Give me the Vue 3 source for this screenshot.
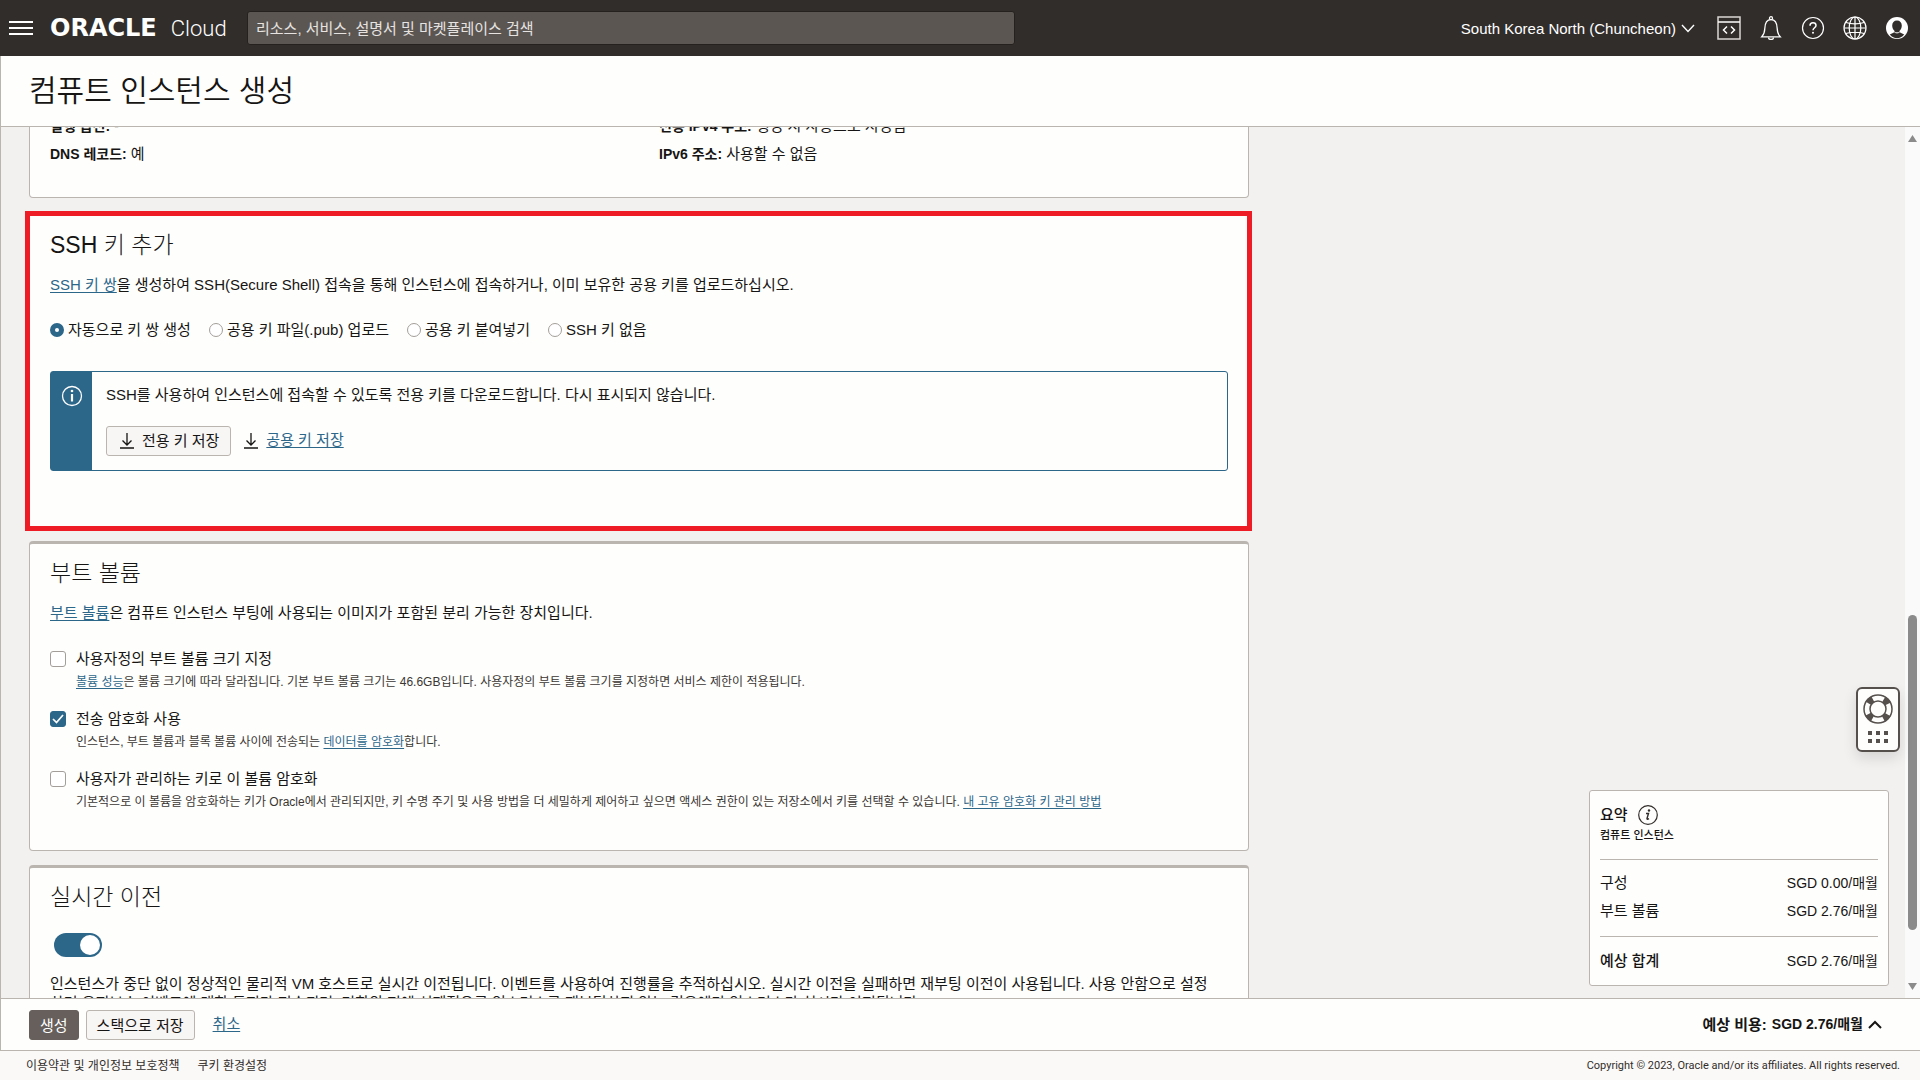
<template>
  <div class="console">
    <header class="topbar">
      <button class="icon-button menu-button" aria-label="메뉴">
        <svg width="24" height="14" viewBox="0 0 24 14"><path d="M0 1h24M0 7h24M0 13h24" stroke="#fff" stroke-width="2" /></svg>
      </button>
      <a href="#" class="logo"><span class="logo-oracle">ORACLE</span><span class="logo-cloud">Cloud</span></a>
      <input v-model="search" class="search" type="search" aria-label="검색" placeholder="리소스, 서비스, 설명서 및 마켓플레이스 검색" />
      <div class="topbar-right">
        <button class="region">
          South Korea North (Chuncheon)
          <svg width="14" height="9" viewBox="0 0 14 9"><path d="M1 1l6 6.5L13 1" fill="none" stroke="#fff" stroke-width="1.4" /></svg>
        </button>
        <button class="icon-button" aria-label="개발자 도구">
          <svg width="24" height="24" viewBox="0 0 24 24" fill="none" stroke="#d9d6d3" stroke-width="1.5">
            <rect x="1" y="1" width="22" height="22" />
            <path d="M1 6h22" stroke="#fff" />
            <path d="M10 10.5L6.500 14l3.500 3.500M14 10.500l3.500 3.500-3.500 3.500" stroke="#fff" />
          </svg>
        </button>
        <button class="icon-button" aria-label="공지사항">
          <svg width="24" height="24" viewBox="0 0 24 24" fill="none" stroke="#fff" stroke-width="1.3">
            <circle cx="12" cy="2.200" r="1.500" />
            <path d="M2.800 20.800c2.200-2.300 2.900-4.300 3-8.300C6 7 8 3.700 12 3.700s6 3.300 6.200 8.800c.1 4 .8 6 3 8.300z" />
            <path d="M9.500 21.500a2.500 2 0 0 0 5 0" />
          </svg>
        </button>
        <button class="icon-button" aria-label="도움말">
          <svg width="24" height="24" viewBox="0 0 24 24" fill="none" stroke="#fff" stroke-width="1.200">
            <circle cx="12" cy="12" r="10.500" />
            <path d="M9 9.700c0-1.800 1.200-2.900 3-2.900s3 1.100 3 2.700c0 2.300-3 2.300-3 4.800" stroke-width="1.500" />
            <circle cx="12" cy="16.800" r="1" fill="#fff" stroke="none" />
          </svg>
        </button>
        <button class="icon-button" aria-label="언어">
          <svg width="24" height="24" viewBox="0 0 24 24" fill="none" stroke="#fff" stroke-width="1.200">
            <circle cx="12" cy="12" r="11" />
            <ellipse cx="12" cy="12" rx="5.800" ry="11" />
            <path d="M12 1v22M1 12h22M3 6.500c5 1.700 13 1.700 18 0M3 17.500c5-1.700 13-1.700 18 0" />
          </svg>
        </button>
        <button class="icon-button" aria-label="프로파일">
          <svg width="24" height="24" viewBox="0 0 24 24">
            <circle cx="12" cy="12" r="11" fill="#fff" />
            <path d="M12 4.500c-3 0-4.800 2-4.800 5 0 2.200.8 4 2.200 5.200v1.500L4.800 18.500C7 21.200 9.300 22.200 12 22.200s5-1 7.200-3.700l-4.600-2.300v-1.500c1.400-1.200 2.200-3 2.200-5.200 0-3-1.800-5-4.800-5z" fill="#312d2a" />
            <path d="M9.400 16c1.600 1.200 3.600 1.200 5.200 0" fill="none" stroke="#fff" />
          </svg>
        </button>
      </div>
    </header>

    <div class="workspace">
      <div class="title-bar"><h1>컴퓨트 인스턴스 생성</h1></div>

      <div class="body">
        <main class="content">
          <section class="card network">
            <dl class="details">
              <div v-for="item in networkDetails" :key="item.label">
                <dt>{{ item.label }}:</dt>
                <dd>{{ item.value }}</dd>
              </div>
            </dl>
          </section>

          <section class="card ssh">
            <h2>SSH 키 추가</h2>
            <p><a href="#">SSH 키 쌍</a>을 생성하여 SSH(Secure Shell) 접속을 통해 인스턴스에 접속하거나, 이미 보유한 공용 키를 업로드하십시오.</p>
            <div class="radios" role="radiogroup" aria-label="SSH 키 추가">
              <label v-for="option in keyOptions" :key="option.value">
                <input v-model="keyMode" type="radio" name="ssh-key" :value="option.value" />
                {{ option.label }}
              </label>
            </div>
            <div class="notice">
              <div class="notice-icon">
                <svg width="22" height="22" viewBox="0 0 22 22" fill="none" stroke="#fff" stroke-width="1.300">
                  <circle cx="11" cy="11" r="9.500" />
                  <path d="M11 9v7.500" stroke-width="2.200" />
                  <circle cx="11" cy="6" r="1.300" fill="#fff" stroke="none" />
                </svg>
              </div>
              <div class="notice-body">
                <p>SSH를 사용하여 인스턴스에 접속할 수 있도록 전용 키를 다운로드합니다. 다시 표시되지 않습니다.</p>
                <div class="downloads">
                  <button class="button save-key">
                    <svg width="14" height="16" viewBox="0 0 14 16"><path d="M7 0v12M2.500 7.500L7 12l4.500-4.500M0 15h14" /></svg>
                    <span>전용 키 저장</span>
                  </button>
                  <a href="#" class="save-link">
                    <svg width="14" height="16" viewBox="0 0 14 16"><path d="M7 0v12M2.500 7.500L7 12l4.500-4.500M0 15h14" /></svg>
                    <span>공용 키 저장</span>
                  </a>
                </div>
              </div>
            </div>
          </section>

          <section class="card boot">
            <h2>부트 볼륨</h2>
            <p><a href="#">부트 볼륨</a>은 컴퓨트 인스턴스 부팅에 사용되는 이미지가 포함된 분리 가능한 장치입니다.</p>
            <div class="checks">
              <div v-for="option in bootOptions" :key="option.id" class="check">
                <input :id="option.id" v-model="option.checked" type="checkbox" />
                <label :for="option.id">{{ option.label }}</label>
                <p class="hint">{{ option.before }}<a href="#">{{ option.link }}</a>{{ option.after }}</p>
              </div>
            </div>
          </section>

          <section class="card live">
            <h2>실시간 이전</h2>
            <input v-model="liveMigration" class="toggle" type="checkbox" role="switch" aria-label="실시간 이전" />
            <p>인스턴스가 중단 없이 정상적인 물리적 VM 호스트로 실시간 이전됩니다. 이벤트를 사용하여 진행률을 추적하십시오. 실시간 이전을 실패하면 재부팅 이전이 사용됩니다. 사용 안함으로 설정하면 유지보수 이벤트에 대한 통지가 전송되며, 기한의 전에 선제적으로 인스턴스를 재부팅하지 않는 경우에만 인스턴스가 실시간 이전됩니다.</p>
          </section>
        </main>

        <aside class="summary">
          <div class="summary-title">
            <h3>요약</h3>
            <svg width="20" height="20" viewBox="0 0 20 20" fill="none" stroke="#312d2a">
              <circle cx="10" cy="10" r="9.300" stroke-width="1.200" />
              <path d="M8 8.500h2.500L9 13.500c-.2.900.6 1 2 .2" stroke-width="1.400" />
              <circle cx="11" cy="5.500" r="1.200" fill="#312d2a" stroke="none" />
            </svg>
          </div>
          <div class="summary-sub">컴퓨트 인스턴스</div>
          <dl class="costs">
            <div v-for="cost in costs" :key="cost.label">
              <dt>{{ cost.label }}</dt>
              <dd>{{ cost.value }}</dd>
            </div>
          </dl>
          <dl class="total">
            <div>
              <dt>예상 합계</dt>
              <dd>SGD 2.76/매월</dd>
            </div>
          </dl>
        </aside>

        <button class="help-widget" aria-label="지원">
          <svg width="30" height="30" viewBox="0 0 30 30" fill="none" stroke="#55504c">
            <circle cx="15" cy="15" r="11" stroke-width="7" stroke-dasharray="6 11.279" stroke-dashoffset="-5.640" />
            <circle cx="15" cy="15" r="14" stroke-width="1.500" />
            <circle cx="15" cy="15" r="8" stroke-width="1.500" />
          </svg>
          <svg width="20" height="12" viewBox="0 0 20 12" fill="#55504c">
            <path d="M0 0h4v4H0zM8 0h4v4H8zM16 0h4v4h-4zM0 8h4v4H0zM8 8h4v4H8zM16 8h4v4h-4z" />
          </svg>
        </button>

        <div class="scrollbar" aria-hidden="true">
          <svg width="9" height="7" viewBox="0 0 9 7"><path d="M4.500 0L9 7H0z" fill="#8b8b8b" /></svg>
          <div class="scroll-track"><div class="scroll-thumb"></div></div>
          <svg width="9" height="7" viewBox="0 0 9 7"><path d="M4.500 7L9 0H0z" fill="#8b8b8b" /></svg>
        </div>
      </div>

      <div class="actions">
        <button class="button primary">생성</button>
        <button class="button">스택으로 저장</button>
        <a href="#" class="cancel">취소</a>
        <button class="estimate">
          <span class="estimate-label">예상 비용:</span>
          <span>SGD 2.76/매월</span>
          <svg width="14" height="9" viewBox="0 0 14 9"><path d="M1 8l6-6 6 6" fill="none" stroke="#161513" stroke-width="2" /></svg>
        </button>
      </div>
    </div>

    <footer class="footer">
      <a href="#">이용약관 및 개인정보 보호정책</a>
      <a href="#">쿠키 환경설정</a>
      <span class="copyright">Copyright © 2023, Oracle and/or its affiliates. All rights reserved.</span>
    </footer>
  </div>
</template>

<script setup>
import { ref } from 'vue';

const search = ref('');
const keyMode = ref('generate');
const liveMigration = ref(true);

const networkDetails = [
  { label: '실행 옵션', value: '-' },
  { label: '전용 IPv4 주소', value: '생성 시 자동으로 지정됨' },
  { label: 'DNS 레코드', value: '예' },
  { label: 'IPv6 주소', value: '사용할 수 없음' },
];

const keyOptions = [
  { value: 'generate', label: '자동으로 키 쌍 생성' },
  { value: 'upload', label: '공용 키 파일(.pub) 업로드' },
  { value: 'paste', label: '공용 키 붙여넣기' },
  { value: 'none', label: 'SSH 키 없음' },
];

const bootOptions = ref([
  {
    id: 'custom-size',
    label: '사용자정의 부트 볼륨 크기 지정',
    checked: false,
    before: '',
    link: '볼륨 성능',
    after: '은 볼륨 크기에 따라 달라집니다. 기본 부트 볼륨 크기는 46.6GB입니다. 사용자정의 부트 볼륨 크기를 지정하면 서비스 제한이 적용됩니다.',
  },
  {
    id: 'transit-encryption',
    label: '전송 암호화 사용',
    checked: true,
    before: '인스턴스, 부트 볼륨과 블록 볼륨 사이에 전송되는 ',
    link: '데이터를 암호화',
    after: '합니다.',
  },
  {
    id: 'own-key',
    label: '사용자가 관리하는 키로 이 볼륨 암호화',
    checked: false,
    before: '기본적으로 이 볼륨을 암호화하는 키가 Oracle에서 관리되지만, 키 수명 주기 및 사용 방법을 더 세밀하게 제어하고 싶으면 액세스 권한이 있는 저장소에서 키를 선택할 수 있습니다. ',
    link: '내 고유 암호화 키 관리 방법',
    after: '',
  },
]);

const costs = [
  { label: '구성', value: 'SGD 0.00/매월' },
  { label: '부트 볼륨', value: 'SGD 2.76/매월' },
];
</script>

<style>
body {
  margin: 0;
}
</style>

<style scoped>
.console {
  display: flex;
  flex-direction: column;
  height: 100vh;
  overflow: hidden;
  font-family: 'Liberation Sans', 'Noto Sans CJK KR', sans-serif;
  font-size: 15px;
  line-height: 20px;
  color: #161513;
}

.console * {
  box-sizing: border-box;
}

h1, h2, h3, p, dl, dd {
  margin: 0;
}

button, input {
  font-family: inherit;
  font-size: 15px;
  color: inherit;
}

button {
  cursor: pointer;
}

svg {
  display: block;
  flex: none;
}

a {
  color: #2c6689;
  text-underline-offset: 2px;
}

/* Top bar */
.topbar {
  display: flex;
  align-items: center;
  flex: none;
  height: 56px;
  padding: 0 11px 0 9px;
  background: #312d2a;
  color: #fff;
}

.icon-button {
  padding: 0;
  border: none;
  background: none;
}

.logo {
  display: flex;
  align-items: baseline;
  gap: 14px;
  width: 197px;
  margin-left: 17px;
  color: #fff;
  text-decoration: none;
}

.logo-oracle {
  font-family: 'DejaVu Sans', sans-serif;
  font-size: 24px;
  font-weight: bold;
}

.logo-cloud {
  font-family: Roboto, sans-serif;
  font-size: 22px;
  font-weight: 300;
}

.search {
  flex: 0 1 768px;
  height: 34px;
  padding: 0 8px;
  border: 1px solid #25211f;
  border-radius: 3px;
  background: #5b5652;
  color: #fff;
}

.search::placeholder {
  color: #e6e3e1;
}

.topbar-right {
  display: flex;
  align-items: center;
  gap: 18px;
  margin-left: auto;
}

.region {
  display: flex;
  align-items: center;
  gap: 5px;
  margin-right: 4px;
  padding: 0;
  border: none;
  background: none;
}

/* Workspace */
.workspace {
  display: flex;
  flex-direction: column;
  flex: 1;
  min-height: 0;
  border-left: 1px solid #bbb5b0;
  background: #fefefd;
}

.title-bar {
  flex: none;
  padding: 15px 28px;
  border-bottom: 1px solid #bbb5b0;
}

h1 {
  font-size: 30px;
  font-weight: 350;
  line-height: 40px;
}

.body {
  position: relative;
  display: flex;
  flex: 1;
  min-height: 0;
  overflow: hidden;
  background: #f3f1f0;
}

.content {
  display: flex;
  flex-direction: column;
  flex: 1;
  gap: 14px;
  padding: 0 656px 0 28px;
}

.card {
  flex: none;
  padding: 13px 20px 39px;
  border: 1px solid #bbb5b0;
  border-top-width: 3px;
  border-radius: 4px;
  background: #fefefd;
}

.network {
  margin-top: -18px;
  padding: 0 20px 29px;
}

.details {
  display: grid;
  grid-template-columns: 1fr 1fr;
  column-gap: 40px;
  line-height: 28px;
}

.details dt, .details dd {
  display: inline;
}

.details dt {
  margin-right: 4px;
  font-size: 14px;
  font-weight: bold;
}

h2 {
  margin-bottom: 14px;
  font-size: 23px;
  font-weight: 300;
  line-height: 32px;
}

.ssh {
  margin: -1px -3px -4px -4px;
  padding: 13px 19px 55px 20px;
  border: 5px solid #ee1c24;
  border-radius: 0;
}

.radios {
  display: flex;
  flex-wrap: wrap;
  gap: 18px;
  margin: 25px 0 31px;
}

.radios label {
  display: flex;
  align-items: center;
  gap: 4px;
}

.radios input {
  appearance: none;
  width: 14px;
  height: 14px;
  margin: 0;
  border: 1px solid #a39e9a;
  border-radius: 50%;
  background: #fff;
}

.radios input:checked {
  border: 5px solid #2c6689;
}

.notice {
  display: flex;
  border: 1px solid #2c6689;
  border-radius: 3px;
}

.notice-icon {
  display: flex;
  justify-content: center;
  width: 41px;
  padding-top: 13px;
  background: #2c6689;
}

.notice-body {
  padding: 13px 14px 14px;
}

.downloads {
  display: flex;
  align-items: center;
  gap: 13px;
  margin-top: 21px;
}

.downloads path {
  fill: none;
  stroke: #161513;
  stroke-width: 1.3;
}

.downloads span {
  padding-bottom: 3px;
}

.button {
  display: flex;
  align-items: center;
  height: 30px;
  padding: 0 10px 2px;
  border: 1px solid #bbb5b0;
  border-radius: 3px;
  background: #f8f6f5;
}

.save-key {
  gap: 8px;
  padding: 0 11px 0 13px;
}

.save-link {
  display: flex;
  align-items: center;
  gap: 8px;
}

/* Boot volume */
.checks {
  display: flex;
  flex-direction: column;
  gap: 18px;
  margin-top: 26px;
}

.check {
  display: grid;
  grid-template-columns: 16px 1fr;
  align-items: center;
  gap: 4px 10px;
}

.check input {
  appearance: none;
  width: 16px;
  height: 16px;
  margin: 0;
  border: 1px solid #a39e9a;
  border-radius: 3px;
  background: #fff;
}

.check input:checked {
  border-color: #2c6689;
  background: #2c6689 url("data:image/svg+xml,%3Csvg xmlns='http://www.w3.org/2000/svg' viewBox='0 0 14 14'%3E%3Cpath d='M2 7l3.500 3.500L12 3' fill='none' stroke='white' stroke-width='1.700'/%3E%3C/svg%3E");
}

.hint {
  grid-column: 2;
  font-size: 12px;
  line-height: 18px;
  color: #3a3632;
}

/* Live migration */
.live h2 {
  margin-bottom: 20px;
}

.live p {
  margin-top: 17px;
  padding-right: 10px;
  line-height: 19px;
}

.toggle {
  appearance: none;
  display: flex;
  align-items: center;
  width: 48px;
  height: 24px;
  margin: 0 4px;
  padding: 0 2px;
  border-radius: 12px;
  background: #8b8580;
}

.toggle::before {
  content: '';
  width: 20px;
  height: 20px;
  border-radius: 50%;
  background: #fff;
}

.toggle:checked {
  justify-content: flex-end;
  background: #2c6689;
}

/* Floating panels */
.summary {
  position: absolute;
  right: 31px;
  bottom: 12px;
  width: 300px;
  padding: 12px 10px 10px;
  border: 1px solid #bbb5b0;
  border-radius: 3px;
  background: #fefefd;
}

.summary-title {
  display: flex;
  align-items: center;
  gap: 10px;
  height: 24px;
}

h3 {
  font-size: 15px;
  font-weight: 500;
}

.summary-sub {
  margin-bottom: 16px;
  font-size: 11px;
  font-weight: 500;
  line-height: 16px;
}

.costs, .total {
  border-top: 1px solid #bbb5b0;
}

.costs {
  padding: 9px 0 11px;
}

.total {
  padding-top: 10px;
}

.costs div, .total div {
  display: flex;
  justify-content: space-between;
  line-height: 28px;
}

.costs dd, .total dd {
  font-size: 14px;
}

.total dt {
  font-weight: 500;
}

.help-widget {
  position: absolute;
  top: 560px;
  right: 20px;
  display: flex;
  flex-direction: column;
  align-items: center;
  gap: 7px;
  width: 44px;
  height: 65px;
  padding: 5px 0;
  border: 2px solid #55504c;
  border-radius: 6px;
  background: #fefefd;
  box-shadow: 0 6px 14px rgba(0, 0, 0, 0.12);
}

.scrollbar {
  display: flex;
  flex-direction: column;
  align-items: center;
  flex: none;
  width: 15px;
  padding: 8px 0;
  background: #fafafa;
}

.scroll-track {
  display: flex;
  flex: 1;
  flex-direction: column;
  justify-content: flex-end;
  padding-bottom: 53px;
}

.scroll-thumb {
  width: 9px;
  height: 40%;
  border-radius: 5px;
  background: #8b8b8b;
}

/* Bottom bars */
.actions {
  display: flex;
  align-items: center;
  flex: none;
  gap: 7px;
  padding: 11px 38px 10px 28px;
  border-top: 1px solid #bbb5b0;
  border-bottom: 1px solid #bbb5b0;
}

.cancel, .estimate span {
  padding-bottom: 2px;
}

.primary {
  border-color: #665f5b;
  background: #665f5b;
  color: #fff;
}

.cancel {
  margin-left: 11px;
}

.estimate {
  display: flex;
  align-items: center;
  gap: 5px;
  margin-left: auto;
  padding: 0 0 2px;
  border: none;
  background: none;
  font-size: 14px;
  font-weight: bold;
}

.estimate-label {
  font-size: 15px;
}

.footer {
  display: flex;
  align-items: center;
  flex: none;
  gap: 18px;
  height: 29px;
  padding: 0 20px 0 26px;
  background: #fbf9f8;
  font-size: 12px;
  color: #312d2a;
}

.footer a {
  color: inherit;
  text-decoration: none;
}

.copyright {
  margin-left: auto;
  font-family: Roboto, sans-serif;
  font-size: 11px;
}
</style>
